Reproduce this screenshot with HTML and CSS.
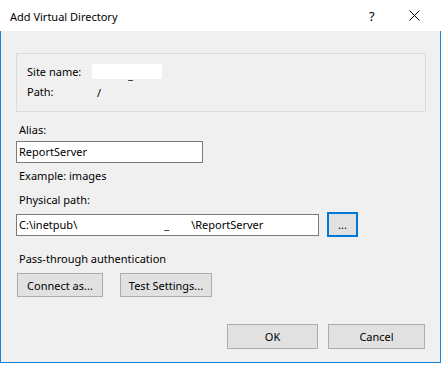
FILE: index.html
```html
<!DOCTYPE html>
<html lang="en">
<head>
    <meta charset="UTF-8">
    <title>Add Virtual Directory</title>
    <link rel="stylesheet" href="styles.css">
</head>
<body>
    <div class="dialog">
        <div class="titlebar">
            <span class="title">Add Virtual Directory</span>
            <span class="help">?</span>
            <span class="close">
                <svg width="11" height="11" viewBox="0 0 11 11">
                    <path d="M0.5 0.5 L10.5 10.5 M10.5 0.5 L0.5 10.5" stroke="#000" stroke-width="1" fill="none"/>
                </svg>
            </span>
        </div>

        <div class="content">
            <div class="group">
                <div class="info-row">
                    <span class="info-label">Site name:</span>
                    <span class="redacted"><span class="mark">_</span></span>
                </div>
                <div class="info-row">
                    <span class="info-label">Path:</span>
                    <span class="info-value">/</span>
                </div>
            </div>

            <div class="label label-alias">Alias:</div>
            <div class="textbox textbox-alias">ReportServer</div>
            <div class="label label-example">Example: images</div>

            <div class="label label-path">Physical path:</div>
            <div class="path-row">
                <div class="textbox textbox-path">C:\inetpub\<span class="gap-one">_</span><span class="gap-two">\ReportServer</span></div>
                <button class="btn btn-browse">...</button>
            </div>

            <div class="label label-auth">Pass-through authentication</div>
            <div class="auth-row">
                <button class="btn btn-connect">Connect as...</button>
                <button class="btn btn-test">Test Settings...</button>
            </div>

            <div class="footer">
                <button class="btn btn-ok">OK</button>
                <button class="btn btn-cancel">Cancel</button>
            </div>
        </div>
    </div>
</body>
</html>
```

FILE: styles.css
```css
/* Windows style dialog */
body {
    margin: 0;
    background: #fff;
    font-family: 'Segoe UI', 'Noto Sans', sans-serif;
    font-size: 11px;
    color: #000;
}

.dialog {
    width: 441px;
}

.titlebar {
    height: 31px;
    display: flex;
    align-items: center;
    background: #fff;
}

.title {
    margin-left: 10px;
    margin-top: 1px;
    font-size: 11px;
}

.help {
    margin-left: auto;
    width: 10px;
    font-size: 13px;
}

.close {
    display: flex;
    margin-left: 30px;
    margin-right: 21px;
}

.content {
    box-sizing: border-box;
    height: 332px;
    background: #f0f0f0;
    border: 1px solid #1883d7;
    border-top: none;
    padding: 22px 15px 0 15px;
}

.group {
    box-sizing: border-box;
    width: 410px;
    height: 59px;
    border: 1px solid #dcdcdc;
    padding: 9px 0 0 10px;
}

.info-row {
    display: flex;
    align-items: center;
    height: 17px;
    margin-bottom: 3px;
}

.info-label {
    width: 65px;
}

.redacted {
    position: relative;
    width: 70px;
    height: 15px;
    background: #fff;
}

.redacted .mark {
    position: absolute;
    left: 36px;
    top: 3px;
}

.info-value {
    padding-left: 5px;
    padding-top: 2px;
}

.label {
    line-height: 16px;
    padding-left: 3px;
}

.label-alias {
    margin-top: 10px;
}

.textbox {
    box-sizing: border-box;
    height: 22px;
    line-height: 20px;
    background: #fff;
    border: 1px solid #7a7a7a;
    padding-left: 2px;
    white-space: nowrap;
    overflow: hidden;
}

.textbox-alias {
    width: 187px;
    margin-top: 3px;
}

.label-example {
    margin-top: 5px;
}

.label-path {
    margin-top: 8px;
}

.path-row {
    display: flex;
    align-items: center;
    gap: 8px;
    margin-top: 4px;
}

.textbox-path {
    width: 303px;
}

.gap-one {
    margin-left: 87px;
}

.gap-two {
    margin-left: 22px;
}

.btn {
    box-sizing: border-box;
    height: 24px;
    font-family: inherit;
    font-size: 11px;
    color: #000;
    background: #e1e1e1;
    border: 1px solid #adadad;
    padding: 0;
}

.btn-browse {
    width: 31px;
    height: 25px;
    border: 2px solid #0078d7;
}

.label-auth {
    margin-top: 14px;
}

.auth-row {
    display: flex;
    gap: 17px;
    margin-top: 6px;
    padding-left: 1px;
}

.btn-connect {
    width: 86px;
}

.btn-test {
    width: 92px;
}

.footer {
    display: flex;
    justify-content: flex-end;
    gap: 10px;
    margin-top: 27px;
}

.btn-ok {
    width: 91px;
    height: 25px;
}

.btn-cancel {
    width: 97px;
    height: 25px;
}
```
